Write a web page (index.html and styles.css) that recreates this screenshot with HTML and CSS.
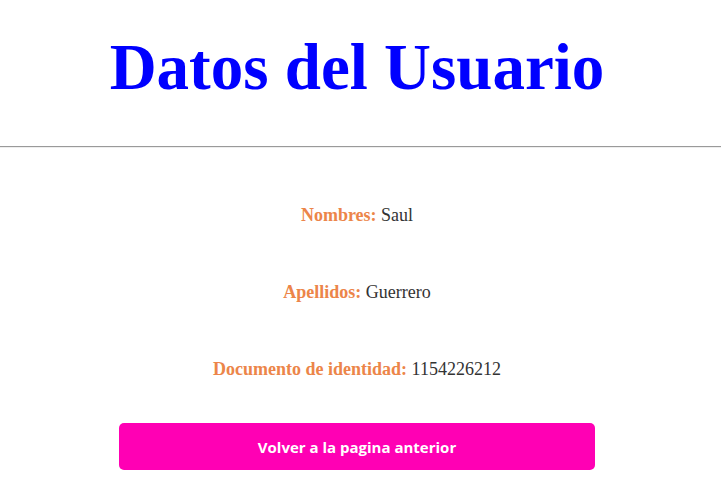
FILE: index.html
```html
<!DOCTYPE html>
<html lang="es">
<head>
<meta charset="utf-8">
<title>Datos del Usuario</title>
<link rel="stylesheet" href="styles.css">
</head>
<body>
  <header class="header">
    <h1 class="title">Datos del Usuario</h1>
  </header>
  <hr class="divider">
  <main class="content">
    <div class="fields">
      <p class="field"><span class="label">Nombres:</span> Saul</p>
      <p class="field"><span class="label">Apellidos:</span> Guerrero</p>
      <p class="field"><span class="label">Documento de identidad:</span> 1154226212</p>
    </div>
    <button class="back" type="button">Volver a la pagina anterior</button>
  </main>
</body>
</html>
```

FILE: styles.css
```css
html, body {
  margin: 0;
  padding: 0;
  background: #fff;
}
body {
  font-family: "Liberation Serif", "Times New Roman", serif;
  color: #333;
}
.header {
  padding-right: 7px;
  text-align: center;
}
.title {
  margin: 0;
  padding: 30px 0 42px;
  font-size: 65px;
  line-height: 74px;
  font-weight: bold;
  color: #0000ff;
}
.divider {
  margin: 0;
  border: 0;
  border-top: 1px solid #9a9a9a;
  border-bottom: 1px solid #eeeeee;
  height: 0;
}
.content {
  padding: 57px 7px 0 0;
  display: flex;
  flex-direction: column;
  align-items: center;
}
.fields {
  display: flex;
  flex-direction: column;
  align-items: center;
  gap: 56px;
}
.field {
  margin: 0;
  font-size: 18px;
  line-height: 21px;
}
.label {
  color: #ec8549;
  font-weight: bold;
}
.back {
  margin-top: 43px;
  width: 66.667%;
  height: 47px;
  border: 0;
  border-radius: 5px;
  background: #ff00b4;
  color: #fff;
  font-family: "Open Sans", "Noto Sans", sans-serif;
  font-weight: 700;
  font-size: 15px;
}
```
